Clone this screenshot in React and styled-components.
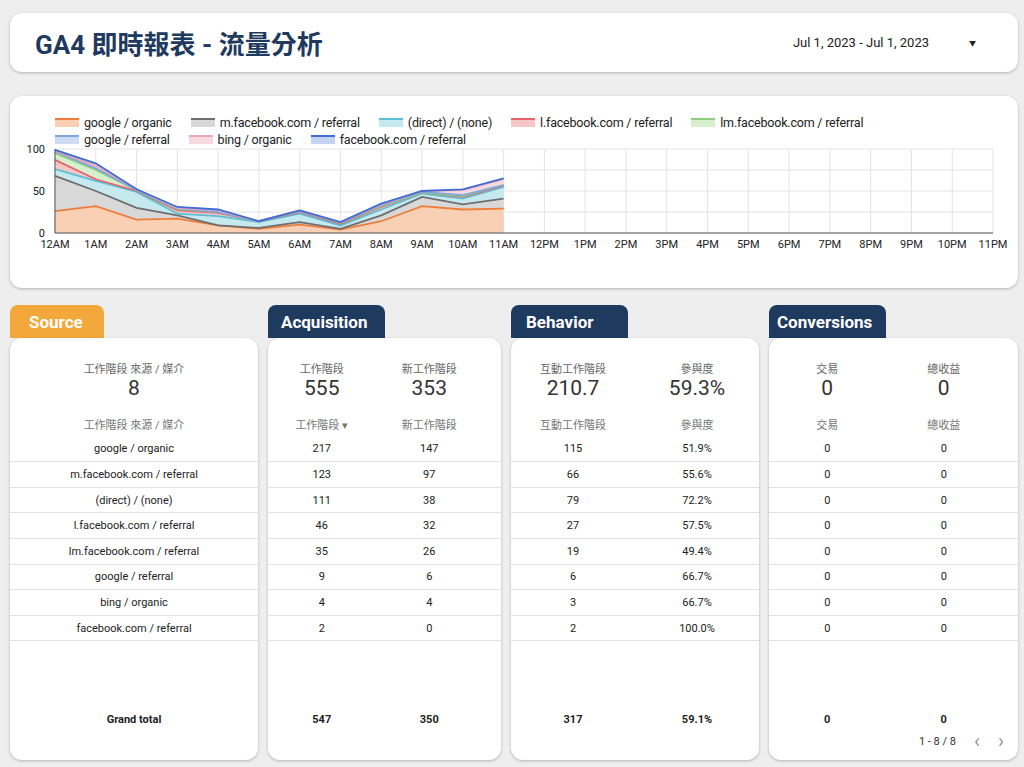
import styled, { createGlobalStyle } from 'styled-components';

const GlobalStyle = createGlobalStyle`
  body { margin: 0; background: #eeeeee; font-family: Roboto, "Noto Sans CJK TC", sans-serif; }
`;

const Page = styled.div`
  width: 1024px;
  height: 767px;
  padding: 13px 6px 0 10px;
  box-sizing: border-box;
  display: flex;
  flex-direction: column;
  overflow: hidden;
`;

const Card = styled.div`
  background: #fff;
  border-radius: 12px;
  box-shadow: 0 1px 3px rgba(0, 0, 0, 0.25);
`;

const Header = styled(Card)`
  height: 59px;
  display: flex;
  align-items: center;
  padding: 0 42px 0 25px;
`;

const Title = styled.h1`
  margin: 0;
  flex: 1;
  font-size: 26px;
  font-weight: 700;
  color: #1f3a5f;
  font-family: Roboto, "Noto Sans CJK TC", sans-serif;
`;

const DateRange = styled.div`
  font-size: 13px;
  color: #222;
  display: flex;
  gap: 40px;
  align-items: center;
`;

const ChartCard = styled(Card)`
  margin-top: 24px;
  height: 192px;
  padding: 18px 0 0 8px;
  box-sizing: border-box;
`;

const Legend = styled.div`
  display: flex;
  flex-wrap: wrap;
  width: 850px;
  margin-left: 37px;
  row-gap: 1px;
  column-gap: 19px;
`;

const LegendItem = styled.div`
  display: flex;
  align-items: center;
  gap: 5px;
  font-size: 12.5px;
  color: #222;
  height: 16px;
  letter-spacing: -0.2px;
`;

const Swatch = styled.span`
  width: 24px;
  height: 7px;
  border-top: 2px solid ${(p) => p.$line};
  background: ${(p) => p.$fill};
`;

const Panels = styled.div`
  display: grid;
  grid-template-columns: 248px 233px 248px 249px;
  column-gap: 10px;
  margin-top: 17px;
`;

const Panel = styled.div`
  display: flex;
  flex-direction: column;
`;

const Tab = styled.div`
  height: 33px;
  width: ${(p) => p.$w}px;
  background: ${(p) => p.$bg};
  color: #fff;
  font-weight: 700;
  font-size: 17px;
  border-radius: 8px 8px 0 0;
  display: flex;
  align-items: center;
  padding-left: ${(p) => p.$pad}px;
  box-sizing: border-box;
`;

const PanelCard = styled(Card)`
  height: 422px;
  display: flex;
  flex-direction: column;
  padding-top: 22px;
  box-sizing: border-box;
`;

const Grid = styled.div`
  display: grid;
  grid-template-columns: repeat(${(p) => p.$cols}, 1fr);
  padding: 0 ${(p) => p.$pr || 0}px 0 ${(p) => p.$pl || 0}px;
`;

const Score = styled.div`
  text-align: center;
  display: flex;
  flex-direction: column;
  align-items: center;
  height: 52px;
`;

const ScoreLabel = styled.div`
  font-size: 11px;
  color: #666;
`;

const ScoreValue = styled.div`
  font-size: 21px;
  color: #333;
`;

const Cell = styled.div`
  height: 24.6px;
  display: flex;
  align-items: center;
  justify-content: center;
  font-size: 11px;
  color: ${(p) => (p.$head ? '#757575' : '#222')};
  font-weight: ${(p) => (p.$bold ? 700 : 400)};
  border-bottom: ${(p) => (p.$line ? '1px solid #e2e2e2' : 'none')};
  box-sizing: border-box;
`;

const Table = styled.div`
  display: flex;
  flex-direction: column;
`;

const Spacer = styled.div`
  flex: 1;
`;

const Pager = styled.div`
  display: flex;
  justify-content: flex-end;
  align-items: center;
  gap: 18px;
  font-size: 11px;
  color: #333;
  padding: 0 14px 10px 0;
  height: 28px;
  box-sizing: border-box;
`;

const Arrow = styled.span`
  color: #999;
  font-size: 20px;
  line-height: 1;
`;

const hours = ['12AM', '1AM', '2AM', '3AM', '4AM', '5AM', '6AM', '7AM', '8AM', '9AM', '10AM', '11AM',
  '12PM', '1PM', '2PM', '3PM', '4PM', '5PM', '6PM', '7PM', '8PM', '9PM', '10PM', '11PM'];

const series = [
  { name: 'google / organic', line: '#ee7d3b', fill: '#f9d0b4', v: [26, 32, 16, 17, 9, 5, 10, 4, 14, 32, 28, 29] },
  { name: 'm.facebook.com / referral', line: '#6e6e6e', fill: '#d8d8d8', v: [68, 50, 30, 21, 9, 6, 13, 5, 21, 43, 34, 41] },
  { name: '(direct) / (none)', line: '#5bbfd6', fill: '#c6e9f0', v: [76, 62, 49, 23, 20, 13, 23, 9, 28, 47, 41, 55] },
  { name: 'l.facebook.com / referral', line: '#e7636a', fill: '#f5c6c8', v: [87, 64, 50, 27, 24, 14, 25, 11, 31, 48, 43, 56] },
  { name: 'lm.facebook.com / referral', line: '#8ccf7c', fill: '#d6efcf', v: [95, 75, 51, 28, 25, 14, 26, 12, 32, 48, 44, 57] },
  { name: 'google / referral', line: '#7ea6de', fill: '#cddcf3', v: [97, 77, 51, 29, 25, 14, 26, 12, 33, 49, 45, 57] },
  { name: 'bing / organic', line: '#f0a6b8', fill: '#f9d9e1', v: [98, 80, 52, 30, 27, 14, 27, 13, 34, 50, 51, 64] },
  { name: 'facebook.com / referral', line: '#3e6dd4', fill: '#c4d3f3', v: [99, 83, 52, 31, 28, 14, 27, 13, 35, 50, 52, 65] },
];

const X0 = 37, X1 = 975, Y0 = 90, YT = 6;
const xs = (i) => X0 + (i * (X1 - X0)) / 23;
const ys = (v) => Y0 - (v * (Y0 - YT)) / 100;

function Chart() {
  return (
    <svg width="1000" height="112" viewBox="0 0 1000 112" style={{ display: 'block', marginTop: -4 }}>
      {[0, 1, 2, 3, 4].map((k) => (
        <line key={k} x1={X0} x2={X1} y1={YT + k * 21} y2={YT + k * 21} stroke="#e3e3e3" />
      ))}
      {hours.map((h, i) => (
        <line key={h} x1={xs(i)} x2={xs(i)} y1={YT} y2={Y0} stroke="#e3e3e3" />
      ))}
      {series.slice().reverse().map((s, ri) => {
        const idx = series.length - 1 - ri;
        const below = idx > 0 ? series[idx - 1].v : s.v.map(() => 0);
        const top = s.v.map((v, i) => `${xs(i)},${ys(v)}`).join(' ');
        const bot = below.map((v, i) => `${xs(i)},${ys(v)}`).reverse().join(' ');
        return <polygon key={s.name} points={`${top} ${bot}`} fill={s.fill} />;
      })}
      {series.map((s) => (
        <polyline key={s.name} points={s.v.map((v, i) => `${xs(i)},${ys(v)}`).join(' ')} fill="none" stroke={s.line} strokeWidth="1.8" />
      ))}
      <line x1={X0} x2={X1} y1={Y0} y2={Y0} stroke="#555" />
      <line x1={X0} x2={X0} y1={YT} y2={Y0} stroke="#555" />
      {[['100', YT], ['50', YT + 42], ['0', Y0]].map(([t, y]) => (
        <text key={t} x={X0 - 10} y={y + 4} fontSize="11" textAnchor="end" fill="#222" fontFamily="Roboto">{t}</text>
      ))}
      {hours.map((h, i) => (
        <text key={h} x={xs(i)} y={105} fontSize="11" textAnchor="middle" fill="#222" fontFamily="Roboto">{h}</text>
      ))}
    </svg>
  );
}

const sources = ['google / organic', 'm.facebook.com / referral', '(direct) / (none)', 'l.facebook.com / referral',
  'lm.facebook.com / referral', 'google / referral', 'bing / organic', 'facebook.com / referral'];

const panels = [
  { title: 'Source', bg: '#f2a83a', w: 94, pad: 19, cols: 1, pl: 0, pr: 0,
    scores: [['工作階段 來源 / 媒介', '8']], heads: ['工作階段 來源 / 媒介'],
    rows: sources.map((s) => [s]), total: ['Grand total'] },
  { title: 'Acquisition', bg: '#1f3a5f', w: 117, pad: 13, cols: 2, pl: 0, pr: 18,
    scores: [['工作階段', '555'], ['新工作階段', '353']], heads: ['工作階段 ▾', '新工作階段'],
    rows: [[217, 147], [123, 97], [111, 38], [46, 32], [35, 26], [9, 6], [4, 4], [2, 0]], total: [547, 350] },
  { title: 'Behavior', bg: '#1f3a5f', w: 117, pad: 15, cols: 2, pl: 0, pr: 0,
    scores: [['互動工作階段', '210.7'], ['參與度', '59.3%']], heads: ['互動工作階段', '參與度'],
    rows: [[115, '51.9%'], [66, '55.6%'], [79, '72.2%'], [27, '57.5%'], [19, '49.4%'], [6, '66.7%'], [3, '66.7%'], [2, '100.0%']],
    total: [317, '59.1%'] },
  { title: 'Conversions', bg: '#1f3a5f', w: 117, pad: 8, cols: 2, pl: 0, pr: 16, pager: true,
    scores: [['交易', '0'], ['總收益', '0']], heads: ['交易', '總收益'],
    rows: Array.from({ length: 8 }, () => [0, 0]), total: [0, 0] },
];

export default function App() {
  return (
    <Page>
      <GlobalStyle />
      <Header>
        <Title>GA4 即時報表 - 流量分析</Title>
        <DateRange>
          <span>Jul 1, 2023 - Jul 1, 2023</span>
          <span style={{ fontSize: 7 }}>▼</span>
        </DateRange>
      </Header>
      <ChartCard>
        <Legend>
          {series.map((s) => (
            <LegendItem key={s.name}>
              <Swatch $line={s.line} $fill={s.fill} />
              {s.name}
            </LegendItem>
          ))}
        </Legend>
        <Chart />
      </ChartCard>
      <Panels>
        {panels.map((p) => (
          <Panel key={p.title}>
            <Tab $bg={p.bg} $w={p.w} $pad={p.pad}>{p.title}</Tab>
            <PanelCard>
              <Grid $cols={p.cols} $pl={p.pl} $pr={p.pr}>
                {p.scores.map(([l, v]) => (
                  <Score key={l}>
                    <ScoreLabel>{l}</ScoreLabel>
                    <ScoreValue>{v}</ScoreValue>
                  </Score>
                ))}
              </Grid>
              <Table>
                <Grid $cols={p.cols} $pl={p.pl} $pr={p.pr}>
                  {p.heads.map((h) => <Cell key={h} $head>{h}</Cell>)}
                </Grid>
                {p.rows.map((r, i) => (
                  <Grid key={i} $cols={p.cols} $pl={p.pl} $pr={p.pr} style={{ borderBottom: '1px solid #e2e2e2' }}>
                    {r.map((c, j) => <Cell key={j}>{c}</Cell>)}
                  </Grid>
                ))}
              </Table>
              <Spacer />
              <Grid $cols={p.cols} $pl={p.pl} $pr={p.pr}>
                {p.total.map((t, j) => <Cell key={j} $bold>{t}</Cell>)}
              </Grid>
              {p.pager ? (
                <Pager>
                  <span>1 - 8 / 8</span>
                  <Arrow>‹</Arrow>
                  <Arrow>›</Arrow>
                </Pager>
              ) : (
                <Pager />
              )}
            </PanelCard>
          </Panel>
        ))}
      </Panels>
    </Page>
  );
}
